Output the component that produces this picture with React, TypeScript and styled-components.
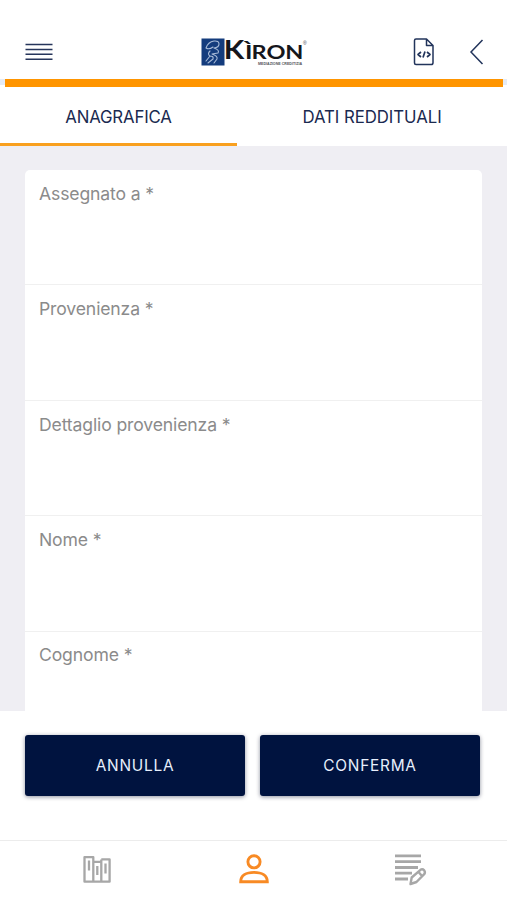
import React from "react";
import styled, { createGlobalStyle } from "styled-components";

const navy = "#00133f";
const orange = "#ff9500";

const GlobalStyle = createGlobalStyle`
  * { box-sizing: border-box; }
  body { margin: 0; background: #fff; font-family: Inter, "Liberation Sans", sans-serif; }
  button { font-family: inherit; border: 0; padding: 0; background: none; }
`;

const Screen = styled.div`
  display: flex;
  flex-direction: column;
  width: 100%;
  height: 900px;
  overflow: hidden;
  background: #fff;
`;

const Header = styled.header`
  display: grid;
  grid-template-columns: 1fr auto 1fr;
  align-items: end;
  height: 79px;
  padding: 0 23px 10px 25px;
  svg { display: block; }
`;

const LogoSlot = styled.div`
  padding-left: 1px;
`;

const HeaderActions = styled.div`
  display: flex;
  justify-content: flex-end;
  align-items: center;
  gap: 35px;
`;

const IconButton = styled.button`
  display: flex;
  justify-self: start;
`;

const Accent = styled.div`
  flex: none;
  height: 8px;
  padding: 0 4px 0 5px;
  background: linear-gradient(#e5ebf5 6px, #fff 6px);
  &::before {
    content: "";
    display: block;
    height: 100%;
    background: ${orange};
  }
`;

const Tabs = styled.nav`
  display: grid;
  grid-template-columns: 237px 1fr;
  flex: none;
  height: 59px;
`;

const Tab = styled.button<{ $active?: boolean }>`
  padding-top: 4px;
  border-bottom: 3px solid ${(p) => (p.$active ? "#f9a01f" : "transparent")};
  color: #1b2a50;
  font-size: 16.8px;
  letter-spacing: ${(p) => (p.$active ? "-0.15px" : "-0.05px")};
`;

const Content = styled.main`
  flex: none;
  height: 565px;
  padding: 24px 25px 0;
  overflow: hidden;
  background: #efeef3;
`;

const Card = styled.section`
  height: 600px;
  overflow: hidden;
  border-radius: 5px;
  background: #fff;
`;

const Field = styled.label`
  display: block;
  height: 115.4px;
  padding: 11.8px 14px;
  border-bottom: 1px solid #f0f0f0;
  color: #8b8b8b;
  font-size: 17.6px;
  line-height: 23px;
  letter-spacing: -0.14px;
`;

const Actions = styled.div`
  display: grid;
  grid-template-columns: 1fr 1fr;
  gap: 15px;
  flex: none;
  height: 129px;
  padding: 24px 27px 44px 25px;
`;

const ActionButton = styled.button`
  border-radius: 3px;
  background: ${navy};
  color: #e7effc;
  font-size: 15.4px;
  letter-spacing: 0.75px;
  box-shadow: 0 1px 4px rgba(0, 10, 40, 0.45);
`;

const TabBar = styled.footer`
  display: grid;
  grid-template-columns: 194px 120px 193px;
  flex: 1;
  border-top: 1px solid #ececec;
  button { display: flex; justify-content: center; }
  svg { display: block; margin-top: 9px; }
`;

const MenuIcon = () => (
  <svg width="28" height="34" viewBox="0 0 28 34" fill="none" stroke="#26355b" strokeWidth="1.6">
    <path d="M.5 9.5h27M.5 14.5h27M.5 19.3h27M.5 24.2h27" />
  </svg>
);

const Logo = () => (
  <svg width="108" height="42" viewBox="0 -10 108 42">
    <rect x=".5" y="1.5" width="23" height="27" fill="#143c7d" />
    <g fill="none" stroke="#a8bbd8" strokeWidth="1.1" strokeLinecap="round" strokeLinejoin="round">
      <path d="M5 11q2-6 8-7 5-.5 5 3t-5 4M5 11q3 2 7-1M13 11q6 2 4 5l-6 1M9 14q-3 3 0 5l-4 5M11 17q6 2 5 5l-3 4M9 19q4 0 3 3l-5 4" />
    </g>
    <g fill="#15161b" fontFamily="Lato" fontWeight="700">
      <text x="22.8" y="21.5" fontSize="26.5" textLength="20.5" lengthAdjust="spacingAndGlyphs">K</text>
      <text x="44" y="21.5" fontSize="18" textLength="7.5" lengthAdjust="spacingAndGlyphs">Ì</text>
      <text x="50.5" y="21.5" fontSize="19" textLength="52" lengthAdjust="spacingAndGlyphs">RON</text>
    </g>
    <text x="57" y="28" fontFamily="Liberation Sans" fontWeight="700" fontSize="4.2" fill="#51545a" textLength="44" lengthAdjust="spacingAndGlyphs">MEDIAZIONE CREDITIZIA</text>
    <text x="102" y="8" fontFamily="Liberation Sans" fontSize="5" fill="#444">®</text>
  </svg>
);

const CodeFileIcon = () => (
  <svg width="21" height="28" viewBox="0 0 21 28" fill="none" stroke="#22345b" strokeWidth="1.5" strokeLinejoin="round">
    <path d="M3 1h10.500l6.500 6.500v17.200q0 1.800-1.800 1.800H3Q1.500 26.500 1.500 25V2.500Q1.500 1 3 1ZM13.500 1v6.500H20" />
    <path d="m8 14-3 2.500 3 2.500M14 14l3 2.500-3 2.500M12 13.500l-2 6" strokeWidth="1.7" />
  </svg>
);

const BackIcon = () => (
  <svg width="15" height="34" viewBox="0 0 15 34" fill="none" stroke="#22345b" strokeWidth="1.5">
    <path d="M13.5 5 2 17l11.5 12" />
  </svg>
);

const BindersIcon = () => (
  <svg width="30" height="40" viewBox="0 0 30 40" fill="none" stroke="#a7a7a7" strokeWidth="2.3" strokeLinejoin="round">
    <path d="M2.5 7.2h8.8v24.5H2.5ZM11.3 11.8h8v19.9M19.3 9.4h8.3v22.3H11.3M19.3 9.4v3" />
    <path d="M7 10.5v10M15.3 16v9M23.5 13.5v10" />
  </svg>
);

const PersonIcon = () => (
  <svg width="30" height="40" viewBox="0 0 30 40" fill="none" stroke="#f88a24" strokeWidth="2.9">
    <circle cx="15" cy="11.8" r="6.1" />
    <path d="M1.700 31.700C1.700 25.500 7 22.400 15 22.400s13.300 3.100 13.300 9.300Z" strokeLinejoin="miter" />
  </svg>
);

const EditListIcon = () => (
  <svg width="34" height="40" viewBox="0 0 34 40" fill="none" stroke="#a7a7a7" strokeWidth="2.8">
    <path d="M1 5.8h26M1 11.7h26M1 17.5h23M1 23.2h17M1 29h13" />
    <path d="m16.500 34 1.200-6.500 8.800-7.700q2-1.200 3.700.6 1.400 1.900 0 3.800L22.500 32Zm8-12 3.500 4" strokeWidth="2.4" strokeLinejoin="round" />
  </svg>
);

const fields = ["Assegnato a *", "Provenienza *", "Dettaglio provenienza *", "Nome *", "Cognome *"];

export default function App() {
  return (
    <Screen>
      <GlobalStyle />
      <Header>
        <IconButton aria-label="Menu"><MenuIcon /></IconButton>
        <LogoSlot><Logo /></LogoSlot>
        <HeaderActions>
          <IconButton aria-label="Documento"><CodeFileIcon /></IconButton>
          <IconButton aria-label="Indietro"><BackIcon /></IconButton>
        </HeaderActions>
      </Header>
      <Accent />
      <Tabs>
        <Tab $active>ANAGRAFICA</Tab>
        <Tab>DATI REDDITUALI</Tab>
      </Tabs>
      <Content>
        <Card>
          {fields.map((label) => (
            <Field key={label}>{label}</Field>
          ))}
        </Card>
      </Content>
      <Actions>
        <ActionButton>ANNULLA</ActionButton>
        <ActionButton>CONFERMA</ActionButton>
      </Actions>
      <TabBar>
        <button aria-label="Archivio"><BindersIcon /></button>
        <button aria-label="Cliente"><PersonIcon /></button>
        <button aria-label="Note"><EditListIcon /></button>
      </TabBar>
    </Screen>
  );
}
